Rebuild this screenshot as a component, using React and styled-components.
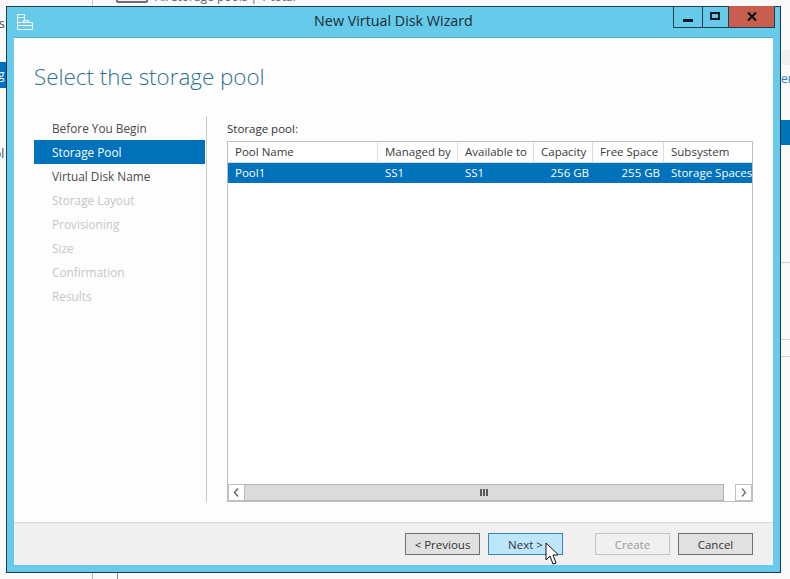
import React from "react";
import styled, { createGlobalStyle } from "styled-components";

const GlobalStyle = createGlobalStyle`
  html, body {
    margin: 0;
    padding: 0;
    background: #f9f9f9;
    overflow: hidden;
  }
  * {
    box-sizing: border-box;
  }
`;

const steps = [
  { label: "Before You Begin", state: "done" },
  { label: "Storage Pool", state: "active" },
  { label: "Virtual Disk Name", state: "done" },
  { label: "Storage Layout" },
  { label: "Provisioning" },
  { label: "Size" },
  { label: "Confirmation" },
  { label: "Results" },
];

const columns = [
  { id: "name", label: "Pool Name", width: 150, value: "Pool1" },
  { id: "managed", label: "Managed by", width: 80, value: "SS1" },
  { id: "available", label: "Available to", width: 76, value: "SS1" },
  { id: "capacity", label: "Capacity", width: 59, value: "256 GB", right: true },
  { id: "free", label: "Free Space", width: 71, value: "255 GB", right: true },
  { id: "subsystem", label: "Subsystem", width: 88, value: "Storage Spaces" },
];

const stepColors = { done: "#4a4a4a", active: "#ffffff" };

const Desktop = styled.div`
  position: relative;
  width: 790px;
  height: 579px;
  overflow: hidden;
  background: #f9f9f9;
  font-family: "Open Sans", "Liberation Sans", sans-serif;
  font-size: 11.5px;
  color: #333333;
`;

const BackText = styled.span`
  position: absolute;
  left: ${(p) => p.$x}px;
  top: ${(p) => p.$y}px;
  font-size: 12px;
  line-height: 16px;
  white-space: nowrap;
  color: ${(p) => p.$color || "#444444"};
`;

const BackBar = styled.div`
  position: absolute;
  left: ${(p) => p.$x}px;
  top: ${(p) => p.$y}px;
  width: ${(p) => p.$w}px;
  height: ${(p) => p.$h}px;
  background: ${(p) => p.$color};
`;

const BackDriveIcon = styled.div`
  position: absolute;
  left: 116px;
  top: -6px;
  width: 32px;
  height: 9px;
  background: #f4f4f4;
  border: 2px solid #6e6e6e;
  border-radius: 2px;
`;

const Window = styled.div`
  position: absolute;
  left: 6px;
  top: 6px;
  width: 775px;
  height: 567px;
  display: flex;
  flex-direction: column;
  background: #66cbea;
  border: 1px solid #1d3a48;
  border-top-color: #24414f;
  padding: 0 7px 7px;
`;

const TitleBar = styled.div`
  position: relative;
  flex: 0 0 30px;
  display: flex;
  align-items: center;
  justify-content: center;
`;

const AppIcon = styled.svg`
  position: absolute;
  left: 2px;
  top: 6px;
`;

const Title = styled.div`
  font-size: 14.3px;
  color: #1b2a33;
  margin-bottom: 3px;
`;

const Controls = styled.div`
  position: absolute;
  right: -2px;
  top: -1px;
  display: flex;
  height: 22px;
  border: 1px solid #1f3f50;
  border-top: 0;
`;

const ControlButton = styled.div`
  width: ${(p) => p.$w}px;
  display: flex;
  align-items: center;
  justify-content: center;
  background: ${(p) => p.$bg || "transparent"};
  border-left: ${(p) => (p.$first ? "0" : "1px solid #1f3f50")};
`;

const MinimizeGlyph = styled.svg`
  margin-top: 8px;
`;

const Client = styled.div`
  flex: 1;
  display: flex;
  flex-direction: column;
  background: #fdfdfd;
  min-height: 0;
  border-top: 1px solid #5aa9c2;
`;

const Heading = styled.h1`
  margin: 0;
  padding: 20px 0 0 20px;
  height: 78px;
  font-size: 22.4px;
  line-height: 37px;
  font-weight: 300;
  color: #2d7391;
`;

const Main = styled.div`
  flex: 1;
  display: flex;
  min-height: 0;
  padding: 0 20px 20px 20px;
`;

const Sidebar = styled.ul`
  list-style: none;
  margin: 0 20px 0 0;
  padding: 0;
  width: 173px;
  border-right: 1px solid #c9c9c9;
  flex: none;
`;

const Step = styled.li`
  height: 24px;
  line-height: 25px;
  width: 171px;
  padding-left: 18px;
  font-size: 11.8px;
  white-space: nowrap;
  color: ${(p) => stepColors[p.$state] || "#c6c6c6"};
  background: ${(p) => (p.$state === "active" ? "#0072bc" : "transparent")};
`;

const Content = styled.div`
  flex: 1;
  display: flex;
  flex-direction: column;
  min-width: 0;
`;

const FieldLabel = styled.div`
  height: 25px;
  line-height: 26px;
  color: #333333;
`;

const ListBox = styled.div`
  flex: 1;
  display: flex;
  flex-direction: column;
  border: 1px solid #bfbfbf;
  background: #ffffff;
  min-height: 0;
`;

const HeaderRow = styled.div`
  display: flex;
  height: 21px;
`;

const HeaderCell = styled.div`
  flex: 0 0 auto;
  padding-left: 7px;
  line-height: 20px;
  white-space: nowrap;
  overflow: hidden;
  color: #3a3a3a;
  border-right: 1px solid #dcdcdc;
  border-bottom: 1px solid #dcdcdc;
  &:last-child {
    border-right: 0;
  }
`;

const DataRow = styled.div`
  display: flex;
  height: 20px;
  background: #0072bc;
  color: #ffffff;
`;

const DataCell = styled.div`
  flex: 0 0 auto;
  line-height: 20px;
  white-space: nowrap;
  overflow: hidden;
  padding: ${(p) => (p.$right ? "0 4px 0 0" : "0 0 0 7px")};
  text-align: ${(p) => (p.$right ? "right" : "left")};
`;

const ListSpace = styled.div`
  flex: 1;
`;

const Scrollbar = styled.div`
  display: flex;
  height: 17px;
  background: #ffffff;
`;

const ScrollButton = styled.div`
  flex: 0 0 17px;
  display: flex;
  align-items: center;
  justify-content: center;
  border: 1px solid #bfbfbf;
  background: #ffffff;
  margin-left: ${(p) => p.$gap || 0}px;
`;

const ScrollThumb = styled.div`
  flex: 0 0 479px;
  display: flex;
  align-items: center;
  justify-content: center;
  gap: 1px;
  background: #dbdbdb;
  border: 1px solid #b4b4b4;
  border-left: 0;
`;

const Grip = styled.span`
  width: 2px;
  height: 7px;
  background: #5a5a5a;
`;

const Footer = styled.div`
  flex: 0 0 43px;
  display: flex;
  align-items: center;
  justify-content: flex-end;
  gap: 8px;
  padding: 0 20px 0 0;
  background: #f0f0f0;
  border-top: 1px solid #d9d9d9;
`;

const Button = styled.button`
  width: 75px;
  height: 22px;
  padding: 0;
  margin-left: ${(p) => p.$gap || 0}px;
  font: inherit;
  color: ${(p) => (p.$disabled ? "#9a9a9a" : "#333333")};
  background: ${(p) => (p.$hover ? "#bde6fd" : p.$disabled ? "#f0f0f0" : "#e1e1e1")};
  border: 1px solid ${(p) => (p.$hover ? "#3c7fb1" : p.$disabled ? "#c4c4c4" : "#707070")};
`;

const Cursor = styled.svg`
  position: absolute;
  left: 545px;
  top: 542px;
`;

export default function App() {
  return (
    <Desktop>
      <GlobalStyle />
      <BackDriveIcon />
      <BackText $x={155} $y={-11} $color="#666666">All storage pools | 1 total</BackText>
      <BackBar $x={92} $y={0} $w={1} $h={6} $color="#c8c8c8" />
      <BackBar $x={92} $y={573} $w={1} $h={6} $color="#b8b8b8" />
      <BackBar $x={117} $y={573} $w={1} $h={6} $color="#8a8a8a" />
      <BackBar $x={0} $y={62} $w={6} $h={26} $color="#0072bc" />
      <BackText $x={-1} $y={16}>s</BackText>
      <BackText $x={-2} $y={67} $color="#ffffff">g</BackText>
      <BackText $x={-6} $y={146}>ol</BackText>
      <BackBar $x={781} $y={120} $w={9} $h={25} $color="#0072bc" />
      <BackBar $x={781} $y={50} $w={9} $h={15} $color="#f0f0f0" />
      <BackText $x={781} $y={71} $color="#2d7db3">er</BackText>
      <BackBar $x={781} $y={262} $w={9} $h={1} $color="#cfcfcf" />
      <BackBar $x={781} $y={339} $w={9} $h={1} $color="#cfcfcf" />
      <BackBar $x={781} $y={356} $w={9} $h={1} $color="#cfcfcf" />
      <Window>
        <TitleBar>
          <AppIcon width="18" height="18" viewBox="0 0 18 18" fill="none" stroke="#ffffff" strokeWidth="1">
            <path d="M1.500 1.500h7v7M1.500 1.500v14M1.500 4.500h7" />
            <path d="M5.500 9.500h11v7h-15v-7h4M7.500 9.500v-2h5v2M1.500 12.500h15" />
          </AppIcon>
          <Title>New Virtual Disk Wizard</Title>
          <Controls>
            <ControlButton $first $w={28}>
              <MinimizeGlyph width="10" height="3" viewBox="0 0 10 3"><rect width="10" height="3" fill="#0c1a22" /></MinimizeGlyph>
            </ControlButton>
            <ControlButton $w={26}>
              <svg width="11" height="9" viewBox="0 0 11 9"><rect x="1" y="1" width="8" height="6" fill="none" stroke="#0c1a22" strokeWidth="2" /></svg>
            </ControlButton>
            <ControlButton $w={46} $bg="#c75e50">
              <svg width="10" height="9" viewBox="0 0 10 9"><path d="M1 .5l8 8M9 .5l-8 8" stroke="#0c1410" strokeWidth="2.2" fill="none" /></svg>
            </ControlButton>
          </Controls>
        </TitleBar>
        <Client>
          <Heading>Select the storage pool</Heading>
          <Main>
            <Sidebar>
              {steps.map((step) => (
                <Step key={step.label} $state={step.state}>{step.label}</Step>
              ))}
            </Sidebar>
            <Content>
              <FieldLabel>Storage pool:</FieldLabel>
              <ListBox>
                <HeaderRow>
                  {columns.map((col) => (
                    <HeaderCell key={col.id} style={{ width: col.width }}>{col.label}</HeaderCell>
                  ))}
                </HeaderRow>
                <DataRow>
                  {columns.map((col) => (
                    <DataCell key={col.id} $right={col.right} style={{ width: col.width }}>{col.value}</DataCell>
                  ))}
                </DataRow>
                <ListSpace />
                <Scrollbar>
                  <ScrollButton>
                    <svg width="7" height="9" viewBox="0 0 7 9"><path d="M5 .5L1.500 4.500 5 8.500" fill="none" stroke="#666666" strokeWidth="1.4" /></svg>
                  </ScrollButton>
                  <ScrollThumb>
                    <Grip /><Grip /><Grip />
                  </ScrollThumb>
                  <ScrollButton $gap={11}>
                    <svg width="7" height="9" viewBox="0 0 7 9"><path d="M2 .5L5.500 4.500 2 8.500" fill="none" stroke="#666666" strokeWidth="1.2" /></svg>
                  </ScrollButton>
                </Scrollbar>
              </ListBox>
            </Content>
          </Main>
          <Footer>
            <Button>&lt; Previous</Button>
            <Button $hover>Next &gt;</Button>
            <Button $disabled $gap={24}>Create</Button>
            <Button>Cancel</Button>
          </Footer>
        </Client>
      </Window>
      <Cursor width="13" height="24" viewBox="0 0 13 24">
        <path d="M1 1v17l4-4 3 8 3-1-3-8h5.500z" fill="#ffffff" stroke="#111111" strokeWidth="1" />
      </Cursor>
    </Desktop>
  );
}
